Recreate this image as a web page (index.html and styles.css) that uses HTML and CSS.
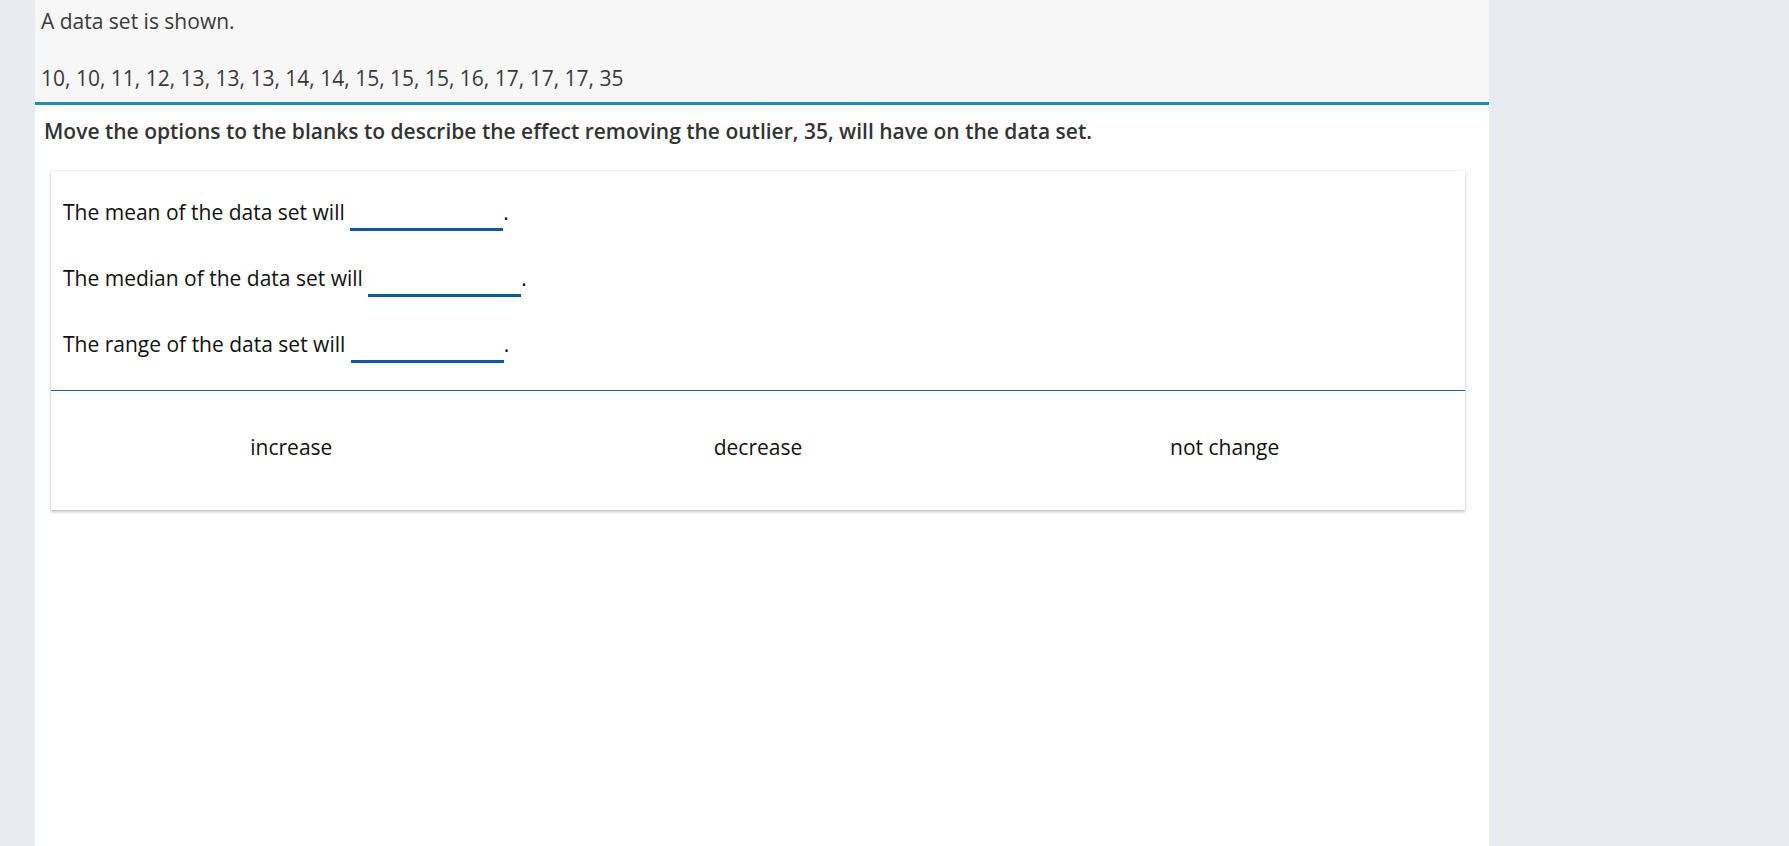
FILE: index.html
```html
<!DOCTYPE html>
<html lang="en">
<head>
<meta charset="utf-8">
<title>Outlier effect</title>
<link rel="stylesheet" href="styles.css">
</head>
<body>
<div class="page">
  <main class="column">
    <section class="stem">
      <p class="stem-line">A data set is shown.</p>
      <p class="stem-line stem-data">10, 10, 11, 12, 13, 13, 13, 14, 14, 15, 15, 15, 16, 17, 17, 17, 35</p>
    </section>
    <p class="prompt">Move the options to the blanks to describe the effect removing the outlier, 35, will have on the data set.</p>
    <div class="card">
      <div class="sentences">
        <p class="sentence">The mean of the data set will <span class="blank">&nbsp;</span>.</p>
        <p class="sentence">The median of the data set will <span class="blank">&nbsp;</span>.</p>
        <p class="sentence">The range of the data set will <span class="blank">&nbsp;</span>.</p>
      </div>
      <div class="options">
        <div class="option">increase</div>
        <div class="option">decrease</div>
        <div class="option">not change</div>
      </div>
    </div>
  </main>
</div>
</body>
</html>
```
FILE: styles.css
```css
html, body {
  margin: 0;
  padding: 0;
}
body {
  background: #e8ebf0;
  font-family: "Open Sans", "Noto Sans", "Liberation Sans", sans-serif;
  font-size: 21px;
  line-height: 31.2px;
}
.page {
  display: flex;
  min-height: 846px;
}
.column {
  margin-left: 35px;
  width: 1454px;
  background: #ffffff;
  min-height: 846px;
}
.stem {
  background: #f7f7f7;
  padding: 6px 6px 8px 6px;
  border-bottom: 3px solid #1e8fbd;
  color: #3a3a3a;
}
.stem-line {
  margin: 0;
}
.stem-data {
  margin-top: 26px;
}
.prompt {
  margin: 11px 0 0 0;
  padding-left: 9px;
  font-weight: 600;
  color: #333333;
}
.card {
  margin: 23px 24px 0 16px;
  background: #ffffff;
  box-shadow: 0 2px 3px rgba(0, 0, 0, 0.22), 0 0 1px rgba(0, 0, 0, 0.25);
}
.sentences {
  padding: 26px 12px 27px 12px;
  border-bottom: 1px solid #1566b7;
  display: flex;
  flex-direction: column;
  gap: 32px;
}
.sentence {
  margin: 0;
  color: #111111;
}
.blank {
  display: inline-block;
  width: 153px;
  border-bottom: 3px solid #0b5aa6;
}
.options {
  display: flex;
  padding: 41px 7px 47px 7px;
}
.option {
  flex: 1 1 0;
  text-align: center;
  color: #111111;
}
```
